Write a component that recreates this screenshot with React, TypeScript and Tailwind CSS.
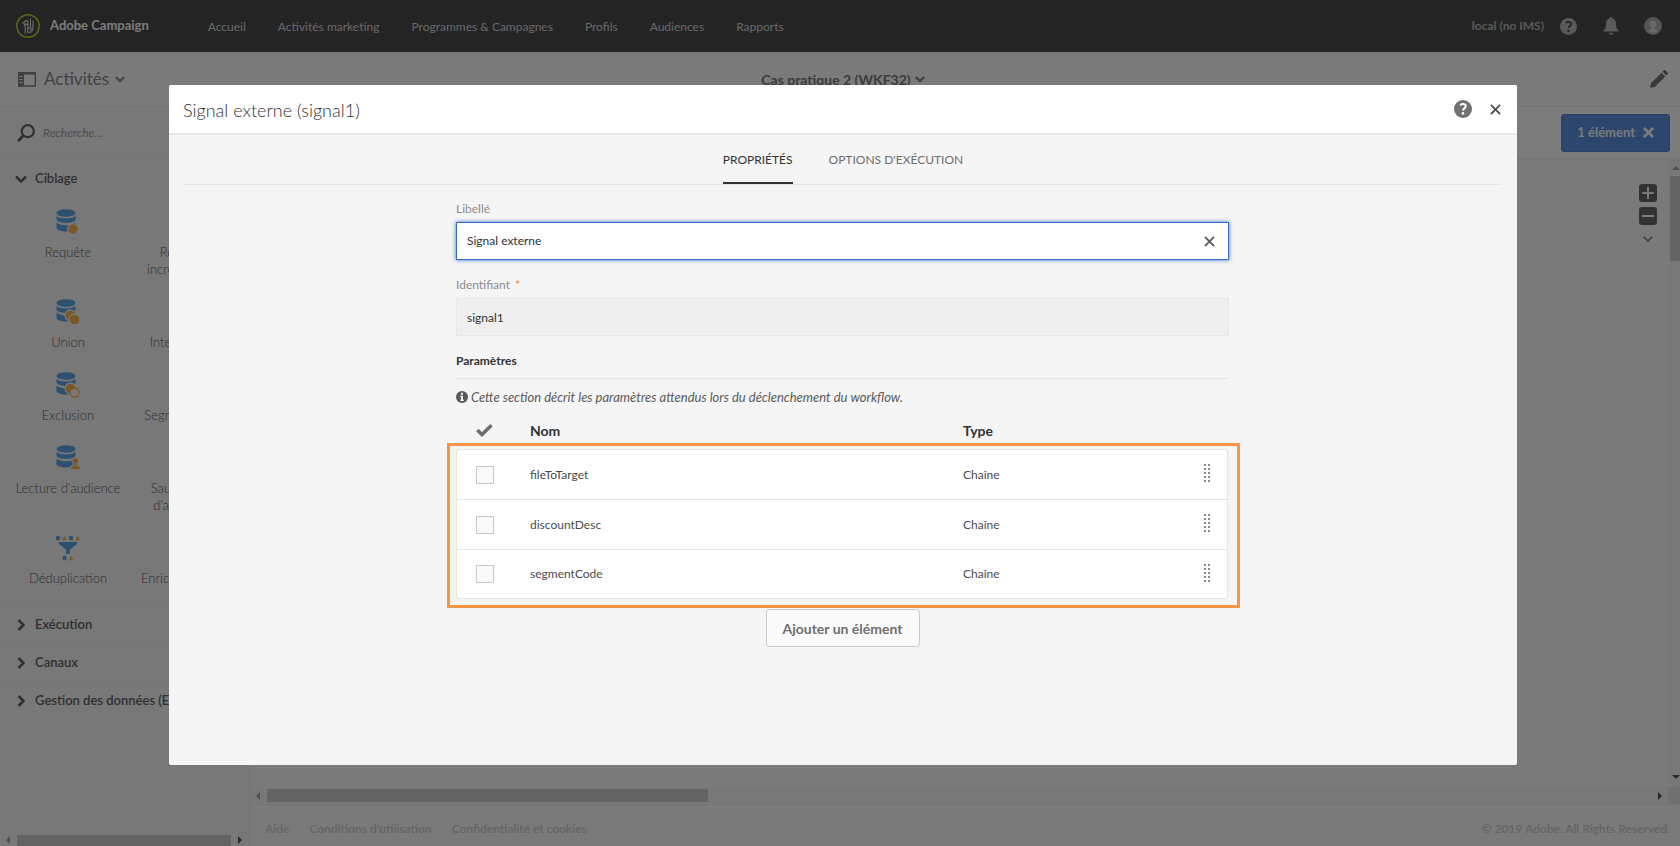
import type { ReactNode } from "react";

const navLinks = ["Accueil", "Activités marketing", "Programmes & Campagnes", "Profils", "Audiences", "Rapports"];
const footerLinks = ["Aide", "Conditions d'utilisation", "Confidentialité et cookies"];
const closedSections = ["Exécution", "Canaux", "Gestion des données (ETL)"];
const params = ["fileToTarget", "discountDesc", "segmentCode"];

function Chevron({ className, weight = 2 }: { className: string; weight?: number }) {
  return (
    <svg viewBox="0 0 12 12" className={className} fill="none" stroke="currentColor" strokeWidth={weight} aria-hidden="true">
      <path d="M1 3.500l5 5 5-5" />
    </svg>
  );
}

function Cross({ className, weight = 2 }: { className: string; weight?: number }) {
  return (
    <svg viewBox="0 0 12 12" className={className} fill="none" stroke="currentColor" strokeWidth={weight} aria-hidden="true">
      <path d="M1 1l10 10M11 1L1 11" />
    </svg>
  );
}

function Database({ children }: { children?: ReactNode }) {
  return (
    <svg width="28" height="28" viewBox="0 0 28 28" aria-hidden="true">
      <g fill="#5a9fe0">
        <ellipse cx="12" cy="5" rx="9.5" ry="3.8" />
        <path d="M2.500 7.400c1.500 2.200 5 3 9.500 3s8-.8 9.500-3v4.400c-.8 2-4.800 3.100-9.500 3.100s-8.700-1.100-9.500-3.100z" />
        <path d="M2.500 14.600c1.500 1.700 5 2.600 9.500 2.600s8-.9 9.500-2.600v5.600c-.8 2-4.800 3.200-9.500 3.200s-8.700-1.200-9.500-3.200z" />
      </g>
      {children}
    </svg>
  );
}

const queryIcon = (
  <Database>
    <circle cx="19" cy="21" r="5.300" fill="#f3b14a" stroke="#f0f0f0" strokeWidth="1.300" />
  </Database>
);

const unionIcon = (
  <Database>
    <circle cx="16.500" cy="17.500" r="5.500" fill="#f3b14a" stroke="#f0f0f0" strokeWidth="1.300" />
    <circle cx="20.500" cy="21.500" r="5.500" fill="#f3b14a" stroke="#f0f0f0" strokeWidth="1.300" />
  </Database>
);

const exclusionIcon = (
  <Database>
    <circle cx="16.500" cy="17.500" r="5.500" fill="#f3b14a" stroke="#f0f0f0" strokeWidth="1.300" />
    <circle cx="20.500" cy="21.500" r="4.500" fill="#f0f0f0" stroke="#f3b14a" strokeWidth="1.300" />
  </Database>
);

const audienceIcon = (
  <Database>
    <path
      d="M21.500 13.500a3.200 3.200 0 0 1 1.700 6v1.700c2 .5 3.700 1.200 3.700 3.100 0 1.400-2 1.700-5.400 1.700s-5.400-.3-5.400-1.700c0-1.900 1.700-2.600 3.700-3.100v-1.700a3.200 3.200 0 0 1 1.700-6z"
      fill="#f3b14a"
      stroke="#f0f0f0"
      strokeWidth="1.200"
    />
  </Database>
);

const dedupIcon = (
  <svg width="28" height="28" viewBox="0 0 28 28" aria-hidden="true">
    <g fill="#5a9fe0">
      <circle cx="4" cy="4" r="2.200" />
      <circle cx="17" cy="4" r="2.200" />
      <circle cx="10.500" cy="24" r="2.200" />
      <path d="M5 8h18v2.200l-7 5.300V20h-4v-4.500L5 10.200z" />
    </g>
    <path d="M8.200 6.200l2.300-4.300 2.300 4.300zM21.400 6.200l2.300-4.300L26 6.200zM14.700 26.200l2.300-4.300 2.300 4.300z" fill="#f3b14a" />
  </svg>
);

const activities = [
  { icon: queryIcon, label: "Requête", next: "Requête incrémentale" },
  { icon: unionIcon, label: "Union", next: "Intersection" },
  { icon: exclusionIcon, label: "Exclusion", next: "Segmentation" },
  { icon: audienceIcon, label: "Lecture d'audience", next: "Sauvegarde d'audience" },
  { icon: dedupIcon, label: "Déduplication", next: "Enrichissement" },
];

function HelpIcon({ className, mark }: { className: string; mark: string }) {
  return (
    <svg viewBox="0 0 18 18" className={className} aria-hidden="true">
      <circle cx="9" cy="9" r="9" fill="currentColor" />
      <path d="M6.200 5.200C7 4.400 8 4.100 9 4.100c1.600 0 2.700.8 2.700 2.200 0 2.100-2.600 2.100-2.600 4.300" fill="none" stroke={mark} strokeWidth="2" />
      <circle cx="9" cy="13.400" r="1.300" fill={mark} />
    </svg>
  );
}

function TopBar() {
  return (
    <header className="flex h-[52px] items-center bg-[#484848] pr-[18px] pl-4">
      <svg width="24" height="24" viewBox="0 0 24 24" fill="none" aria-hidden="true">
        <circle cx="12" cy="12" r="11.200" stroke="#b4cf2a" strokeWidth="1.500" />
        <path d="M9.200 19.500V9.500l2.300 1.200M6.500 9.500l3.500-3 2.500 1.500M8 11.500l1.200-2M12 6.500v8M14.500 4.500v9l-3 1.500v3l3 .5 3-3.500M17 6.500v7l-3 3" stroke="#dcdcd0" strokeWidth="1.100" />
      </svg>
      <span className="ml-[10px] text-[13px] font-bold text-[#f4f4f4]">Adobe Campaign</span>
      <nav className="ml-[59px] flex gap-8 pt-px text-[12px] text-[#d0d0d0]">
        {navLinks.map((link) => (
          <a key={link} href="#">{link}</a>
        ))}
      </nav>
      <div className="ml-auto flex items-center text-[#b4b4b4]">
        <span className="text-[12px] font-bold">local (no IMS)</span>
        <button aria-label="Aide" className="ml-4">
          <HelpIcon className="size-[17px]" mark="#484848" />
        </button>
        <button aria-label="Notifications" className="ml-[26px]">
          <svg width="16" height="18" viewBox="0 0 16 18" fill="currentColor" aria-hidden="true">
            <path d="M8 0c.8 0 1.200.5 1.200 1.300C12 2 13 4 13 6.500c0 4 1 5.500 2.500 6.800v1.200H.5v-1.200C2 12 3 10.500 3 6.500 3 4 4 2 6.800 1.300 6.800.5 7.200 0 8 0zM5.800 15.700h4.400C10 17 9 17.700 8 17.700s-2-.7-2.200-2z" />
          </svg>
        </button>
        <button aria-label="Profil" className="ml-[25px]">
          <svg width="18" height="18" viewBox="0 0 18 18" aria-hidden="true">
            <circle cx="9" cy="9" r="9" fill="#aaa" />
            <path d="M9 3.500c2.200 0 3.300 1.500 3.300 3.700 0 1.500-.7 2.600-1.500 3.400v1.200l3.200 1.700c-1.200 1.500-3 2.300-5 2.300s-3.800-.8-5-2.300l3.200-1.700v-1.200c-.8-.8-1.500-1.900-1.500-3.400C5.700 5 6.800 3.500 9 3.500z" fill="#d0d0d0" />
          </svg>
        </button>
      </div>
    </header>
  );
}

function TitleBar() {
  return (
    <div className="grid h-[55px] grid-cols-3 items-center border-b border-[#e6e6e6] pr-3 pl-[18px]">
      <button className="flex items-center text-[17px] text-[#868686]">
        <svg width="18" height="15" viewBox="0 0 18 15" fill="none" aria-hidden="true">
          <path d="M.7 1h16.600v13H.7z" stroke="#808080" strokeWidth="1.400" />
          <path d="M0 0h18v2.500H0zM0 2h6v13H0z" fill="#808080" />
          <path d="M1.500 4.500h3M1.500 7.500h3M1.500 10.500h3" stroke="#f4f4f4" />
        </svg>
        <span className="ml-2">Activités</span>
        <Chevron className="ml-1.5 size-[10px]" weight={2.5} />
      </button>
      <button className="flex items-center justify-self-center text-[14px] font-bold text-[#787878]">
        Cas pratique 2 (WKF32)
        <Chevron className="ml-1 size-[10px]" weight={2.5} />
      </button>
      <button aria-label="Modifier" className="justify-self-end">
        <svg width="18" height="18" viewBox="0 0 18 18" fill="#707070" aria-hidden="true">
          <path d="M0 18l1.200-5L11.500 2.700l3.800 3.800L5 16.800zM12.500 1.700L14 .2c.4-.3.900-.3 1.200 0l2.600 2.600c.3.300.3.800 0 1.200l-1.500 1.500z" />
        </svg>
      </button>
    </div>
  );
}

function Sidebar() {
  return (
    <aside className="flex w-[250px] shrink-0 flex-col overflow-hidden border-r border-[#e8e8e8] bg-[#f0f0f0]">
      <label className="flex h-[52px] items-center border-b border-[#e8e8e8] pl-[17px]">
        <svg width="18" height="18" viewBox="0 0 18 18" fill="none" stroke="#606060" aria-hidden="true">
          <circle cx="10.800" cy="7.200" r="6" strokeWidth="2.200" />
          <path d="M6.500 11.500L1 17" strokeWidth="3" />
        </svg>
        <input type="search" aria-label="Recherche" placeholder="Recherche..." className="ml-2 w-40 bg-transparent text-[12px] italic outline-none placeholder:text-[#a0a0a0]" />
      </label>
      <section>
        <button className="flex h-[39px] items-center pl-[15px] text-[13px] font-semibold text-[#606060]">
          <Chevron className="size-3" weight={2.500} />
          <span className="ml-2">Ciblage</span>
        </button>
        <ul className="px-[9px] pb-2">
          {activities.map(({ icon, label, next }) => (
            <li key={label} className="grid grid-cols-[118px_112px] py-[10px] text-center text-[13px] leading-[17px] font-light text-[#606060]">
              <div className="flex flex-col items-center gap-2">
                {icon}
                <span className="whitespace-nowrap">{label}</span>
              </div>
              <div className="flex flex-col items-center gap-2">
                <Database />
                <span className="w-[84px]">{next}</span>
              </div>
            </li>
          ))}
        </ul>
      </section>
      {closedSections.map((name) => (
        <button key={name} className="flex h-[38px] shrink-0 items-center border-t border-[#e8e8e8] pl-[15px] text-[13px] font-semibold whitespace-nowrap text-[#606060]">
          <Chevron className="size-3 -rotate-90" weight={2.500} />
          <span className="ml-2">{name}</span>
        </button>
      ))}
      <div className="mt-auto flex h-3 items-center pr-[7px] pl-[6px]">
        <span className="border-y-4 border-r-4 border-y-transparent border-r-[#a0a0a0]" />
        <span className="ml-[7px] h-[11px] flex-1 bg-[#c8c8c8]" />
        <span className="ml-[7px] border-y-4 border-l-4 border-y-transparent border-l-[#505050]" />
      </div>
    </aside>
  );
}

function Workspace() {
  return (
    <main className="flex min-w-0 flex-1 flex-col">
      <div className="flex h-[52px] items-center justify-end border-b border-[#e6e6e6] bg-[#f8f8f8] pr-[10px]">
        <button className="flex h-[38px] items-center rounded-[3px] border border-[#4f80cc] bg-[#5a8cdc] px-[15px] text-[13px] font-bold text-[#f4f4f4]">
          1 élément
          <Cross className="ml-2 size-[11px]" weight={3} />
        </button>
      </div>
      <div className="flex flex-1">
        <div className="flex flex-1 flex-col items-end gap-[5px] pt-[25px] pr-[11px]">
          <button aria-label="Zoom avant" className="flex size-[18px] items-center justify-center rounded-[3px] bg-[#646464]">
            <svg width="14" height="14" viewBox="0 0 14 14" stroke="#f0f0f0" strokeWidth="2" aria-hidden="true">
              <path d="M7 1v12M1 7h12" />
            </svg>
          </button>
          <button aria-label="Zoom arrière" className="flex size-[18px] items-center justify-center rounded-[3px] bg-[#646464]">
            <svg width="14" height="14" viewBox="0 0 14 14" stroke="#f0f0f0" strokeWidth="2" aria-hidden="true">
              <path d="M1 7h12" />
            </svg>
          </button>
          <button aria-label="Plus d'options" className="flex w-[18px] justify-center pt-1 text-[#888]">
            <Chevron className="size-[10px]" />
          </button>
        </div>
        <div className="flex w-3 flex-col items-end bg-[#f0f0f0] pt-[7px] pb-2">
          <span className="border-x-4 border-b-4 border-x-transparent border-b-[#a0a0a0]" />
          <span className="mt-1.5 h-[85px] w-[10px] bg-[#c8c8c8]" />
          <span className="mt-auto border-x-4 border-t-4 border-x-transparent border-t-[#505050]" />
        </div>
      </div>
      <div className="flex h-[17px] items-center bg-[#f0f0f0] pl-[6px]">
        <span className="border-y-4 border-r-4 border-y-transparent border-r-[#a0a0a0]" />
        <span className="ml-[7px] h-[13px] w-[31%] bg-[#c8c8c8]" />
        <span className="mr-[6px] ml-auto border-y-4 border-l-4 border-y-transparent border-l-[#505050]" />
        <span className="h-full w-3 bg-[#e0e0e0]" />
      </div>
      <footer className="flex h-[42px] items-center border-t border-[#e8e8e8] pt-1.5 pr-[10px] pl-[15px] text-[12px] font-semibold text-[#c8c8c8]">
        <div className="flex gap-5">
          {footerLinks.map((link) => (
            <a key={link} href="#">{link}</a>
          ))}
        </div>
        <span className="ml-auto">© 2019 Adobe. All Rights Reserved.</span>
      </footer>
    </main>
  );
}

function DragHandle() {
  return (
    <svg width="7" height="19" viewBox="0 0 7 19" fill="#8a8a8a" aria-hidden="true">
      {[0, 4, 8, 12, 16].map((y) => (
        <path key={y} d={`M0 ${y}h2v2H0zM4 ${y}h2v2H4z`} />
      ))}
    </svg>
  );
}

function ParamTable() {
  return (
    <div className="relative mr-px">
      <table className="w-full table-fixed border-separate border-spacing-0 text-left">
        <thead>
          <tr className="h-[38px] text-[14px] text-[#323232]">
            <th className="w-[74px] pl-5">
              <svg width="17" height="13" viewBox="0 0 17 13" fill="none" stroke="#6e6e6e" strokeWidth="3.500" aria-label="Sélection">
                <path d="M1.300 6l4.700 4.500L15.500 1.300" />
              </svg>
            </th>
            <th className="font-bold">Nom</th>
            <th className="w-[241px] font-bold">Type</th>
            <th className="w-6" aria-label="Ordre" />
          </tr>
        </thead>
        <tbody className="text-[12px] text-[#4b4b4b] [&_td]:border-t [&_td]:border-[#e6e6e6] [&_td]:bg-white [&_td:first-child]:border-l [&_td:last-child]:border-r [&_tr:first-child_td:first-child]:rounded-tl-[3px] [&_tr:first-child_td:last-child]:rounded-tr-[3px] [&_tr:last-child_td]:border-b [&_tr:last-child_td:first-child]:rounded-bl-[3px] [&_tr:last-child_td:last-child]:rounded-br-[3px]">
          {params.map((name) => (
            <tr key={name} className="h-[50px]">
              <td className="pl-[19px]">
                <input type="checkbox" aria-label={name} className="block size-[18px] appearance-none border border-[#c8c8c8] bg-[#fafafa]" />
              </td>
              <td>{name}</td>
              <td>Chaîne</td>
              <td>
                <button aria-label={`Déplacer ${name}`} className="block pb-0.5">
                  <DragHandle />
                </button>
              </td>
            </tr>
          ))}
        </tbody>
      </table>
      <div className="pointer-events-none absolute top-8 -right-3 -bottom-[9px] -left-[9px] border-3 border-[#f79646]" />
    </div>
  );
}

function SignalDialog() {
  return (
    <div className="fixed inset-0 flex bg-black/50 pt-[85px] pr-[163px] pb-[81px] pl-[169px]">
      <div role="dialog" aria-labelledby="dialog-title" className="flex-1 overflow-auto rounded-[2px] bg-[#f5f5f5]">
        <div className="flex h-[50px] items-center border-b-2 border-[#e8e8e8] bg-white pr-[16px] pl-[14px]">
          <h1 id="dialog-title" className="pt-0.5 text-[18px] font-light text-[#323232]">Signal externe (signal1)</h1>
          <button aria-label="Aide" className="ml-auto text-[#707070]">
            <HelpIcon className="size-[18px]" mark="#ffffff" />
          </button>
          <button aria-label="Fermer" className="ml-[18px] text-[#4b4b4b]">
            <Cross className="size-[11px]" />
          </button>
        </div>
        <div role="tablist" className="mx-[15px] flex h-[50px] justify-center gap-9 border-b border-[#e6e6e6] text-[12px]">
          <button role="tab" aria-selected="true" className="border-b-2 border-[#323232] pt-0.5 text-[#323232]">PROPRIÉTÉS</button>
          <button role="tab" aria-selected="false" className="border-b-2 border-transparent pt-0.5 text-[#6e6e6e]">OPTIONS D'EXÉCUTION</button>
        </div>
        <form className="mx-auto w-full max-w-[774px] pt-4 pr-px">
          <label htmlFor="label" className="block h-[21px] text-[12px] leading-4 text-[#8c8c8c]">Libellé</label>
          <div className="flex h-[38px] items-center border border-[#326ec8] bg-white pr-[13px] pl-[10px] shadow-[0_0_4px_#326ec8]">
            <input id="label" defaultValue="Signal externe" className="flex-1 text-[12px] text-[#323232] outline-none" />
            <button type="button" aria-label="Effacer" className="text-[#5a5a5a]">
              <Cross className="size-[11px]" />
            </button>
          </div>
          <label htmlFor="ident" className="mt-[17px] block h-[21px] text-[12px] leading-4 text-[#8c8c8c]">
            Identifiant <span className="ml-0.5 font-bold text-[#f79646]">*</span>
          </label>
          <input id="ident" readOnly defaultValue="signal1" className="block h-[38px] w-full border border-[#e6e6e6] bg-[#efefef] px-[10px] text-[12px] text-[#323232] outline-none" />
          <h2 className="mt-4 h-[27px] border-b border-[#e6e6e6] text-[12px] leading-[18px] font-bold text-[#323232]">Paramètres</h2>
          <p className="mt-[9px] mb-[5px] flex items-center gap-[3px] text-[13px] leading-[18px] text-[#5a5a5a] italic">
            <svg width="12" height="12" viewBox="0 0 12 12" aria-hidden="true">
              <circle cx="6" cy="6" r="6" fill="#5a5a5a" />
              <path d="M5 1.800h2v1.900H5zM4.300 4.800H7v4h.8V10H4.300V8.800H5V6h-.7z" fill="#f4f4f4" />
            </svg>
            Cette section décrit les paramètres attendus lors du déclenchement du workflow.
          </p>
          <ParamTable />
          <button type="button" className="mx-auto mt-[10px] block h-[38px] rounded-[3px] border border-[#cacaca] bg-[#fafafa] px-4 text-[14px] font-bold text-[#6e6e6e]">
            Ajouter un élément
          </button>
        </form>
      </div>
    </div>
  );
}

export default function App() {
  return (
    <div className="flex min-h-screen flex-col bg-[#f4f4f4] font-['Lato','Liberation_Sans',sans-serif]">
      <TopBar />
      <TitleBar />
      <div className="flex flex-1">
        <Sidebar />
        <Workspace />
      </div>
      <SignalDialog />
    </div>
  );
}
